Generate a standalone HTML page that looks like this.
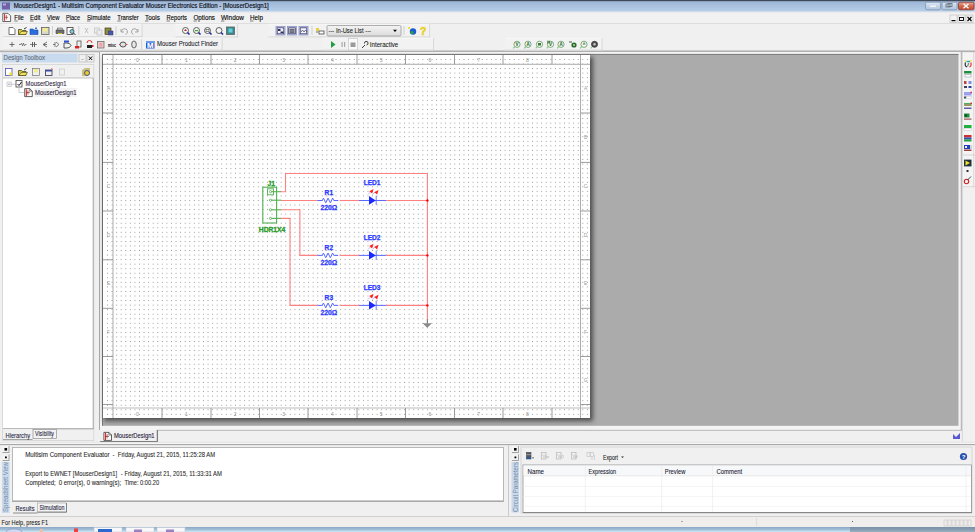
<!DOCTYPE html>
<html><head><meta charset="utf-8"><title>Multisim</title>
<style>html,body{margin:0;padding:0;background:#f0f0f0;overflow:hidden}body{width:975px;height:532px}svg{display:block;font-family:"Liberation Sans",sans-serif}</style>
</head><body>
<svg width="975" height="532" viewBox="0 0 975 532" font-family="Liberation Sans, sans-serif"><defs>
<linearGradient id="tg" x1="0" y1="0" x2="0" y2="1"><stop offset="0" stop-color="#9ab3d3"/><stop offset="1" stop-color="#b9d0ea"/></linearGradient>
<linearGradient id="wb" x1="0" y1="0" x2="0" y2="1"><stop offset="0" stop-color="#dfe9f5"/><stop offset="0.5" stop-color="#c3d4e8"/><stop offset="1" stop-color="#b0c6df"/></linearGradient>
<linearGradient id="cb" x1="0" y1="0" x2="0" y2="1"><stop offset="0" stop-color="#e8a898"/><stop offset="0.5" stop-color="#d06a50"/><stop offset="1" stop-color="#c04a30"/></linearGradient>
<linearGradient id="shr" x1="0" y1="0" x2="1" y2="0"><stop offset="0" stop-color="#5a5a5a"/><stop offset="1" stop-color="#ababab"/></linearGradient>
<linearGradient id="shb" x1="0" y1="0" x2="0" y2="1"><stop offset="0" stop-color="#5a5a5a"/><stop offset="1" stop-color="#ababab"/></linearGradient>
<linearGradient id="taskg" x1="0" y1="0" x2="0" y2="1"><stop offset="0" stop-color="#8aa6c4"/><stop offset="0.6" stop-color="#a9c4dc"/><stop offset="1" stop-color="#c8ecf8"/></linearGradient>
<linearGradient id="combo" x1="0" y1="0" x2="0" y2="1"><stop offset="0" stop-color="#f4f4f4"/><stop offset="1" stop-color="#dcdcdc"/></linearGradient>
<pattern id="dots" x="105.215" y="57.125" width="4.57" height="4.55" patternUnits="userSpaceOnUse"><rect x="1.785" y="1.775" width="1" height="1" fill="#9a9a9a"/></pattern>
<filter id="blur" x="-5%" y="-5%" width="110%" height="110%"><feGaussianBlur stdDeviation="2.2"/></filter>
</defs>
<rect x="0" y="0" width="975" height="532" fill="#f0f0f0" />
<rect x="0" y="0" width="975" height="12" fill="url(#tg)" />
<rect x="0" y="0" width="975" height="1.2" fill="#3e4a5a" />
<rect x="2" y="2.5" width="8" height="7" fill="#6f62a6" />
<rect x="3" y="3.5" width="3" height="2" fill="#b8a8e0" />
<text x="13.8" y="8.2" font-size="6.3" fill="#10101a" stroke="#10101a" stroke-width="0.16" textLength="254.9" lengthAdjust="spacingAndGlyphs" >MouserDesign1 - Multisim Component Evaluator Mouser Electronics Edition - [MouserDesign1]</text>
<rect x="925.5" y="2.2" width="15" height="7.6" rx="1.5" fill="url(#wb)" stroke="#7f93ad" stroke-width="0.8"/>
<rect x="942" y="2.2" width="15" height="7.6" rx="1.5" fill="url(#wb)" stroke="#7f93ad" stroke-width="0.8"/>
<rect x="958.5" y="2.2" width="15.5" height="7.6" rx="1.5" fill="url(#cb)" stroke="#8a3a2a" stroke-width="0.8"/>
<rect x="930" y="5.5" width="6" height="1.5" fill="#f4f4f4" />
<rect x="946" y="4" width="4" height="3" fill="none" stroke="#606a78" stroke-width="0.8" />
<rect x="948" y="3.5" width="4" height="3" fill="none" stroke="#606a78" stroke-width="0.8" />
<line x1="963.5" y1="3.8" x2="968.5" y2="8.2" stroke="#fff" stroke-width="1.3" />
<line x1="968.5" y1="3.8" x2="963.5" y2="8.2" stroke="#fff" stroke-width="1.3" />
<rect x="0" y="11.5" width="975" height="11.5" fill="#f1f1f1" />
<line x1="0" y1="11.8" x2="975" y2="11.8" stroke="#c8d4e0" stroke-width="0.6" />
<rect x="0" y="23" width="975" height="0.8" fill="#d4d4d4" />
<path d="M2.8,13.3 h5.2 l2.6,2.6 v5.6 h-7.8 z" fill="#fafafa" stroke="#404040" stroke-width="0.8"/>
<line x1="4.6" y1="14" x2="4.6" y2="20.8" stroke="#e03030" stroke-width="1.1" />
<line x1="6.4" y1="15" x2="6.4" y2="19.5" stroke="#e03030" stroke-width="0.7" />
<line x1="4.6" y1="17.3" x2="8" y2="17.3" stroke="#404040" stroke-width="0.6" />
<text x="14.3" y="19.8" font-size="6.6" fill="#000" stroke="#000" stroke-width="0.1" textLength="9.5" lengthAdjust="spacingAndGlyphs" >File</text>
<line x1="14.3" y1="21" x2="17.7" y2="21" stroke="#303030" stroke-width="0.6" />
<text x="30" y="19.8" font-size="6.6" fill="#000" stroke="#000" stroke-width="0.1" textLength="10.5" lengthAdjust="spacingAndGlyphs" >Edit</text>
<line x1="30" y1="21" x2="33.4" y2="21" stroke="#303030" stroke-width="0.6" />
<text x="47" y="19.8" font-size="6.6" fill="#000" stroke="#000" stroke-width="0.1" textLength="12.5" lengthAdjust="spacingAndGlyphs" >View</text>
<line x1="47" y1="21" x2="50.4" y2="21" stroke="#303030" stroke-width="0.6" />
<text x="66" y="19.8" font-size="6.6" fill="#000" stroke="#000" stroke-width="0.1" textLength="14" lengthAdjust="spacingAndGlyphs" >Place</text>
<line x1="66" y1="21" x2="69.4" y2="21" stroke="#303030" stroke-width="0.6" />
<text x="87" y="19.8" font-size="6.6" fill="#000" stroke="#000" stroke-width="0.1" textLength="23.6" lengthAdjust="spacingAndGlyphs" >Simulate</text>
<line x1="87" y1="21" x2="90.4" y2="21" stroke="#303030" stroke-width="0.6" />
<text x="117.3" y="19.8" font-size="6.6" fill="#000" stroke="#000" stroke-width="0.1" textLength="21.5" lengthAdjust="spacingAndGlyphs" >Transfer</text>
<line x1="117.3" y1="21" x2="120.7" y2="21" stroke="#303030" stroke-width="0.6" />
<text x="145" y="19.8" font-size="6.6" fill="#000" stroke="#000" stroke-width="0.1" textLength="15" lengthAdjust="spacingAndGlyphs" >Tools</text>
<line x1="145" y1="21" x2="148.4" y2="21" stroke="#303030" stroke-width="0.6" />
<text x="166.5" y="19.8" font-size="6.6" fill="#000" stroke="#000" stroke-width="0.1" textLength="20.5" lengthAdjust="spacingAndGlyphs" >Reports</text>
<line x1="166.5" y1="21" x2="169.9" y2="21" stroke="#303030" stroke-width="0.6" />
<text x="193.5" y="19.8" font-size="6.6" fill="#000" stroke="#000" stroke-width="0.1" textLength="21.5" lengthAdjust="spacingAndGlyphs" >Options</text>
<line x1="193.5" y1="21" x2="196.9" y2="21" stroke="#303030" stroke-width="0.6" />
<text x="221" y="19.8" font-size="6.6" fill="#000" stroke="#000" stroke-width="0.1" textLength="23" lengthAdjust="spacingAndGlyphs" >Window</text>
<line x1="221" y1="21" x2="224.4" y2="21" stroke="#303030" stroke-width="0.6" />
<text x="250" y="19.8" font-size="6.6" fill="#000" stroke="#000" stroke-width="0.1" textLength="13" lengthAdjust="spacingAndGlyphs" >Help</text>
<line x1="250" y1="21" x2="253.4" y2="21" stroke="#303030" stroke-width="0.6" />
<rect x="950" y="15" width="7" height="7.5" fill="#f2f2f2" stroke="#b8b8b8" stroke-width="0.6" />
<rect x="958" y="15" width="7" height="7.5" fill="#f2f2f2" stroke="#b8b8b8" stroke-width="0.6" />
<rect x="966" y="15" width="7" height="7.5" fill="#f2f2f2" stroke="#b8b8b8" stroke-width="0.6" />
<rect x="951.5" y="20" width="4" height="1.2" fill="#000" />
<rect x="959.5" y="17.5" width="4" height="3" fill="none" stroke="#000" stroke-width="0.9" />
<line x1="967.5" y1="16.8" x2="971.5" y2="21" stroke="#000" stroke-width="1.2" />
<line x1="971.5" y1="16.8" x2="967.5" y2="21" stroke="#000" stroke-width="1.2" />
<rect x="0" y="23.8" width="975" height="13.2" fill="#f0f0f0" />
<rect x="0" y="37" width="975" height="14" fill="#f0f0f0" />
<rect x="0" y="50.6" width="975" height="1.2" fill="#9a9a9a" />
<rect x="0" y="51.8" width="975" height="0.6" fill="#c8c8c8" />
<rect x="3" y="24" width="139.5" height="13" fill="#f2f2f2" />
<line x1="3" y1="24.3" x2="142.5" y2="24.3" stroke="#fafafa" stroke-width="0.6" />
<line x1="3" y1="36.6" x2="142.5" y2="36.6" stroke="#d0d0d0" stroke-width="0.8" />
<line x1="142.1" y1="24" x2="142.1" y2="37" stroke="#d0d0d0" stroke-width="0.8" />
<rect x="175.4" y="24" width="62.400000000000006" height="13.299999999999997" fill="#f2f2f2" />
<line x1="175.4" y1="24.3" x2="237.8" y2="24.3" stroke="#fafafa" stroke-width="0.6" />
<line x1="175.4" y1="36.9" x2="237.8" y2="36.9" stroke="#d0d0d0" stroke-width="0.8" />
<line x1="237.4" y1="24" x2="237.4" y2="37.3" stroke="#d0d0d0" stroke-width="0.8" />
<rect x="268.5" y="24" width="161.5" height="13.299999999999997" fill="#f2f2f2" />
<line x1="268.5" y1="24.3" x2="430" y2="24.3" stroke="#fafafa" stroke-width="0.6" />
<line x1="268.5" y1="36.9" x2="430" y2="36.9" stroke="#d0d0d0" stroke-width="0.8" />
<line x1="429.6" y1="24" x2="429.6" y2="37.3" stroke="#d0d0d0" stroke-width="0.8" />
<rect x="3" y="38" width="219.5" height="12.5" fill="#f2f2f2" />
<line x1="3" y1="38.3" x2="222.5" y2="38.3" stroke="#fafafa" stroke-width="0.6" />
<line x1="3" y1="50.1" x2="222.5" y2="50.1" stroke="#d0d0d0" stroke-width="0.8" />
<line x1="222.1" y1="38" x2="222.1" y2="50.5" stroke="#d0d0d0" stroke-width="0.8" />
<rect x="321.7" y="38" width="112.30000000000001" height="12.5" fill="#f2f2f2" />
<line x1="321.7" y1="38.3" x2="434" y2="38.3" stroke="#fafafa" stroke-width="0.6" />
<line x1="321.7" y1="50.1" x2="434" y2="50.1" stroke="#d0d0d0" stroke-width="0.8" />
<line x1="433.6" y1="38" x2="433.6" y2="50.5" stroke="#d0d0d0" stroke-width="0.8" />
<rect x="505.6" y="38" width="96.89999999999998" height="12.5" fill="#f2f2f2" />
<line x1="505.6" y1="38.3" x2="602.5" y2="38.3" stroke="#fafafa" stroke-width="0.6" />
<line x1="505.6" y1="50.1" x2="602.5" y2="50.1" stroke="#d0d0d0" stroke-width="0.8" />
<line x1="602.1" y1="38" x2="602.1" y2="50.5" stroke="#d0d0d0" stroke-width="0.8" />
<path d="M9,27.5 h4 l2,2 v5 h-6 z" fill="#fff" stroke="#505050" stroke-width="0.8"/>
<path d="M18.5,29.5 h3 l1,1 h3.5 v4 h-7.5 z" fill="#d8c840" stroke="#303010" stroke-width="0.7"/>
<path d="M19,34.5 l2,-3 h6.5 l-2,3 z" fill="#f0e060" stroke="#303010" stroke-width="0.5"/>
<line x1="24" y1="29" x2="26.5" y2="27.5" stroke="#202020" stroke-width="0.9" />
<path d="M30,29 h3 l1,1 h4 v4.5 h-8 z" fill="#2a6ee0" stroke="#1a4aa0" stroke-width="0.6"/>
<rect x="35" y="27.5" width="2" height="1.5" fill="#3a7ae0" />
<rect x="41.5" y="27.5" width="7.5" height="7" fill="#d8d8c8" stroke="#606060" stroke-width="0.8" />
<rect x="43" y="28" width="4.5" height="3.5" fill="#f2ec90" />
<line x1="52.5" y1="26" x2="52.5" y2="35" stroke="#c8c8c8" stroke-width="0.8" />
<path d="M56,30 h8 v3.5 h-8 z" fill="#707070" stroke="#404040" stroke-width="0.6"/>
<rect x="57.5" y="28" width="5" height="2" fill="#c0c0c0" stroke="#505050" stroke-width="0.5" />
<rect x="58" y="33" width="4" height="1" fill="#d0c040" />
<rect x="67" y="27.5" width="6" height="7" fill="#fff" stroke="#404040" stroke-width="0.8" />
<circle cx="72" cy="31.5" r="2" fill="#80d0e0" stroke="#303030" stroke-width="0.7"/>
<line x1="73.5" y1="33" x2="75.5" y2="35" stroke="#303030" stroke-width="1" />
<line x1="78.8" y1="26" x2="78.8" y2="35" stroke="#c8c8c8" stroke-width="0.8" />
<line x1="85" y1="28" x2="88" y2="33" stroke="#b8b8b8" stroke-width="0.8" />
<line x1="88" y1="28" x2="85" y2="33" stroke="#b8b8b8" stroke-width="0.8" />
<rect x="94.5" y="28" width="5" height="5" fill="#ececec" stroke="#c0c0c0" stroke-width="0.7" />
<rect x="97" y="30" width="5" height="5" fill="#ececec" stroke="#c0c0c0" stroke-width="0.7" />
<rect x="105" y="28" width="6" height="6.5" fill="#8a8a40" stroke="#404020" stroke-width="0.7" />
<rect x="108.5" y="31" width="4.5" height="4" fill="#4858b0" stroke="#303070" stroke-width="0.5" />
<line x1="116" y1="26" x2="116" y2="35" stroke="#c8c8c8" stroke-width="0.8" />
<path d="M121,29 v3 h3 M121.5,32 a3,3 0 1 1 4,2.5" fill="none" stroke="#a8a8a8" stroke-width="1"/>
<path d="M138,29 v3 h-3 M137.5,32 a3,3 0 1 0 -4,2.5" fill="none" stroke="#a8a8a8" stroke-width="1"/>
<circle cx="185.5" cy="30.5" r="3" fill="#f4f4f4" stroke="#505050" stroke-width="0.9"/>
<line x1="187.5" y1="32.5" x2="189.5" y2="34.5" stroke="#1a2a9a" stroke-width="1.6" />
<path d="M184,31 l1.5,-2 l1.5,2 z" fill="#c02020"/>
<circle cx="196.5" cy="30.5" r="3" fill="#f4f4f4" stroke="#505050" stroke-width="0.9"/>
<line x1="198.5" y1="32.5" x2="200.5" y2="34.5" stroke="#1a2a9a" stroke-width="1.6" />
<rect x="194.8" y="30" width="3.4" height="1.2" fill="#30b030"/>
<circle cx="207.5" cy="30.5" r="3" fill="#f4f4f4" stroke="#505050" stroke-width="0.9"/>
<line x1="209.5" y1="32.5" x2="211.5" y2="34.5" stroke="#1a2a9a" stroke-width="1.6" />
<rect x="206" y="29.5" width="3" height="2" fill="none" stroke="#606060" stroke-width="0.7"/>
<circle cx="219" cy="30.5" r="3" fill="#f4f4f4" stroke="#505050" stroke-width="0.9"/>
<line x1="221" y1="32.5" x2="223" y2="34.5" stroke="#1a2a9a" stroke-width="1.6" />
<rect x="226.5" y="27" width="8" height="7.5" fill="#3a8a8a" stroke="#606060" stroke-width="0.8" />
<rect x="228.5" y="28.5" width="4" height="4" fill="#60d0e0" />
<rect x="276" y="26.5" width="9" height="8.5" fill="#d8dcf0" stroke="#8088c0" stroke-width="0.7" />
<rect x="277.2" y="27.8" width="6.6" height="6" fill="#f4f4f8" stroke="#383870" stroke-width="0.8" />
<rect x="287.5" y="26.5" width="9" height="8.5" fill="#d8dcf0" stroke="#8088c0" stroke-width="0.7" />
<rect x="288.7" y="27.8" width="6.6" height="6" fill="#f4f4f8" stroke="#383870" stroke-width="0.8" />
<rect x="299" y="26.5" width="9" height="8.5" fill="#d8dcf0" stroke="#8088c0" stroke-width="0.7" />
<rect x="300.2" y="27.8" width="6.6" height="6" fill="#f4f4f8" stroke="#383870" stroke-width="0.8" />
<rect x="278" y="29" width="2.5" height="2" fill="#303050" />
<rect x="280.5" y="31.5" width="3" height="1.5" fill="#303050" />
<rect x="289.5" y="28.8" width="5" height="4.4" fill="#606070" />
<line x1="289.5" y1="30.3" x2="294.5" y2="30.3" stroke="#c0c0c0" stroke-width="0.4" />
<line x1="289.5" y1="31.8" x2="294.5" y2="31.8" stroke="#c0c0c0" stroke-width="0.4" />
<path d="M301,32 l1.5,-2 l1.5,2 l1.5,-2 l1.5,2" fill="none" stroke="#404060" stroke-width="0.7"/>
<line x1="312" y1="26" x2="312" y2="35" stroke="#c8c8c8" stroke-width="0.8" />
<rect x="316" y="28" width="3" height="3" fill="#e8d040" />
<rect x="319" y="31" width="5" height="3" fill="#fff" stroke="#303030" stroke-width="0.7" />
<line x1="317" y1="31" x2="317" y2="33" stroke="#303030" stroke-width="0.7" />
<rect x="327" y="25.5" width="74" height="10.5" rx="1.2" fill="url(#combo)" stroke="#9a9a9a" stroke-width="0.8"/>
<text x="328.5" y="33" font-size="6.6" fill="#1a1a1a" stroke="#1a1a1a" stroke-width="0.08" textLength="42.5" lengthAdjust="spacingAndGlyphs" >--- In-Use List ---</text>
<path d="M393,29.8 h4 l-2,2.2 z" fill="#000"/>
<line x1="404" y1="26" x2="404" y2="35" stroke="#c8c8c8" stroke-width="0.8" />
<circle cx="413" cy="31.5" r="3.2" fill="#1a5ad0"/>
<circle cx="412" cy="32.5" r="1.6" fill="#30a040"/>
<rect x="408" y="27" width="2" height="2" fill="#f0e040" />
<text x="420" y="35.3" font-size="10.5" fill="#e8d020" stroke="#e8d020" stroke-width="0.5" font-weight="bold" stroke="#6a5a10">?</text>
<line x1="9.5" y1="44.5" x2="14.5" y2="44.5" stroke="#505050" stroke-width="0.8" />
<line x1="12" y1="42" x2="12" y2="47" stroke="#505050" stroke-width="0.8" />
<path d="M19,44.5 h1.5 l1,-1.3 l1,2.6 l1,-2.6 l1,2.6 l1,-1.3 h1" fill="none" stroke="#505050" stroke-width="0.7"/>
<line x1="30" y1="44.5" x2="37" y2="44.5" stroke="#505050" stroke-width="0.7" />
<line x1="32.5" y1="42" x2="32.5" y2="47" stroke="#505050" stroke-width="0.9" />
<line x1="34.5" y1="42" x2="34.5" y2="47" stroke="#505050" stroke-width="0.9" />
<path d="M47,42 l-4,2.5 l4,2.5 M44,44.5 h3" fill="none" stroke="#505050" stroke-width="0.8"/>
<path d="M53,44.5 h2 M55,42 v5 M56,42 l3,2.5 l-3,2.5" fill="none" stroke="#505050" stroke-width="0.7"/>
<path d="M64,43 h3 q3,0 4,2.5 q-1,2.5 -4,2.5 h-3 z" fill="none" stroke="#303030" stroke-width="0.8"/>
<rect x="64" y="40.5" width="5" height="2" fill="#3050d0" />
<rect x="77" y="41" width="4" height="6" fill="#f0f0f0" stroke="#404040" stroke-width="0.7" />
<rect x="75" y="46" width="4" height="2.5" fill="#e02020" />
<path d="M87,43 a2.5,2.5 0 0 1 5,0" fill="none" stroke="#e02020" stroke-width="0.9"/>
<rect x="87" y="45" width="5" height="3" fill="#202020" />
<rect x="92" y="45" width="1.5" height="2" fill="#e02020" />
<rect x="97.5" y="41.5" width="6.5" height="6.5" fill="#e8c8c8" stroke="#707070" stroke-width="0.8" />
<rect x="99.5" y="43" width="2.5" height="3.5" fill="#f0a0a0" />
<text x="108" y="46.5" font-size="4.5" fill="#202020" stroke="#202020" stroke-width="0.08" textLength="8" lengthAdjust="spacingAndGlyphs" font-weight="bold" >misc</text>
<ellipse cx="123" cy="44.5" rx="3" ry="2.5" fill="#e0e0e0" stroke="#303030" stroke-width="0.8"/>
<line x1="119" y1="44.5" x2="120" y2="44.5" stroke="#e02020" stroke-width="0.8" />
<line x1="126" y1="44.5" x2="127.5" y2="44.5" stroke="#e02020" stroke-width="0.8" />
<ellipse cx="134" cy="44.5" rx="2.3" ry="3.5" fill="#e8e8e8" stroke="#404040" stroke-width="0.8"/>
<line x1="141.6" y1="39.5" x2="141.6" y2="49.5" stroke="#c8c8c8" stroke-width="0.8" />
<rect x="146" y="41" width="8.5" height="7.5" fill="#2a5ad0" />
<rect x="146" y="41" width="8.5" height="2" fill="#6a9ae8" />
<text x="147" y="48" font-size="6.5" fill="#fff" stroke="#fff" stroke-width="0.08" textLength="6.5" lengthAdjust="spacingAndGlyphs" font-weight="bold" >M</text>
<text x="157" y="46.3" font-size="6.6" fill="#1a1a2a" stroke="#1a1a2a" stroke-width="0.08" textLength="61" lengthAdjust="spacingAndGlyphs" >Mouser Product Finder</text>
<path d="M331,41 l4.5,3.5 l-4.5,3.5 z" fill="#20a040"/>
<rect x="341.5" y="42" width="1.2" height="5" fill="#a8a8a8" />
<rect x="344" y="42" width="1.2" height="5" fill="#a8a8a8" />
<rect x="348.5" y="38.5" width="9" height="11.5" fill="#fafafa" stroke="#c8c8c8" stroke-width="0.7" />
<rect x="350.5" y="42.5" width="5" height="4.5" fill="#9a9a9a" />
<path d="M362,48 l3,-3 M364.5,43.5 a1.8,1.8 0 1 1 2,1.5" fill="none" stroke="#404040" stroke-width="1"/>
<text x="369.8" y="47.3" font-size="6.6" fill="#1a1a1a" stroke="#1a1a1a" stroke-width="0.08" textLength="28.5" lengthAdjust="spacingAndGlyphs" >Interactive</text>
<circle cx="517" cy="44.3" r="3.1" fill="#f4f8f4" stroke="#4a8a4a" stroke-width="0.7"/>
<line x1="514.7" y1="46.6" x2="513.2" y2="48.3" stroke="#80c880" stroke-width="1.1" />
<text x="517" y="46.2" font-size="4.5" fill="#2a6a2a" stroke="#2a6a2a" stroke-width="0.08" font-weight="bold" text-anchor="middle" >V</text>
<circle cx="528" cy="44.3" r="3.1" fill="#f4f8f4" stroke="#4a8a4a" stroke-width="0.7"/>
<line x1="525.7" y1="46.6" x2="524.2" y2="48.3" stroke="#80c880" stroke-width="1.1" />
<text x="528" y="46.2" font-size="4.5" fill="#2a6a2a" stroke="#2a6a2a" stroke-width="0.08" font-weight="bold" text-anchor="middle" >A</text>
<circle cx="539.5" cy="44.3" r="3.1" fill="#f4f8f4" stroke="#4a8a4a" stroke-width="0.7"/>
<line x1="537.2" y1="46.6" x2="535.7" y2="48.3" stroke="#80c880" stroke-width="1.1" />
<circle cx="550.5" cy="44.3" r="3.1" fill="#f4f8f4" stroke="#4a8a4a" stroke-width="0.7"/>
<line x1="548.2" y1="46.6" x2="546.7" y2="48.3" stroke="#80c880" stroke-width="1.1" />
<text x="550.5" y="46.2" font-size="4.5" fill="#2a6a2a" stroke="#2a6a2a" stroke-width="0.08" font-weight="bold" text-anchor="middle" >V</text>
<circle cx="561" cy="44.3" r="3.1" fill="#f4f8f4" stroke="#4a8a4a" stroke-width="0.7"/>
<line x1="558.7" y1="46.6" x2="557.2" y2="48.3" stroke="#80c880" stroke-width="1.1" />
<text x="561" y="46.2" font-size="4.5" fill="#2a6a2a" stroke="#2a6a2a" stroke-width="0.08" font-weight="bold" text-anchor="middle" >A</text>
<circle cx="584" cy="44.3" r="3.1" fill="#f4f8f4" stroke="#4a8a4a" stroke-width="0.7"/>
<line x1="581.7" y1="46.6" x2="580.2" y2="48.3" stroke="#80c880" stroke-width="1.1" />
<text x="584" y="46.2" font-size="4.5" fill="#2a6a2a" stroke="#2a6a2a" stroke-width="0.08" font-weight="bold" text-anchor="middle" >^</text>
<rect x="538" y="43" width="3" height="2.5" fill="#3a7a3a" />
<line x1="547" y1="41.3" x2="550" y2="41.3" stroke="#3a7a3a" stroke-width="0.9" />
<line x1="547" y1="42.8" x2="550" y2="42.8" stroke="#3a7a3a" stroke-width="0.9" />
<circle cx="574" cy="45" r="2.6" fill="#2a6a2a"/>
<line x1="569" y1="42" x2="572" y2="42" stroke="#2a5a2a" stroke-width="0.9" />
<rect x="573.3" y="44" width="1.4" height="2" fill="#c0e0c0" />
<circle cx="594.5" cy="44.3" r="3" fill="#505050" stroke="#303030" stroke-width="0.8"/>
<circle cx="594.5" cy="44.3" r="1.2" fill="#c0c0c0"/>
<line x1="592" y1="46.8" x2="590.8" y2="48.3" stroke="#80c880" stroke-width="1.1" />
<rect x="2" y="53.5" width="75.5" height="9" fill="#c8daee" />
<text x="3.6" y="60.3" font-size="6.6" fill="#606a78" stroke="#606a78" stroke-width="0.08" textLength="41.5" lengthAdjust="spacingAndGlyphs" >Design Toolbox</text>
<rect x="79" y="54.5" width="7" height="7.5" fill="#f0f0f0" stroke="#b0b0b0" stroke-width="0.6" />
<line x1="81.5" y1="59.5" x2="83.5" y2="59.5" stroke="#909090" stroke-width="0.6" />
<rect x="87" y="54.5" width="7" height="7.5" fill="#f0f0f0" stroke="#b0b0b0" stroke-width="0.6" />
<line x1="88.8" y1="56.5" x2="92.2" y2="60" stroke="#000" stroke-width="1" />
<line x1="92.2" y1="56.5" x2="88.8" y2="60" stroke="#000" stroke-width="1" />
<rect x="2.4" y="64.4" width="91.4" height="376" fill="none" stroke="#d4d4d4" stroke-width="0.8" />
<rect x="5.5" y="68.5" width="6.5" height="7" fill="#fff" stroke="#5050b0" stroke-width="0.8" />
<rect x="9.5" y="72.5" width="2.5" height="3" fill="#e8e030" />
<path d="M18.5,70.5 h3 l1,1 h3.5 v4 h-7.5 z" fill="#d8c840" stroke="#303010" stroke-width="0.7"/>
<path d="M19,75.5 l2,-3 h6.5 l-2,3 z" fill="#f0e060" stroke="#303010" stroke-width="0.5"/>
<line x1="24" y1="70" x2="26.5" y2="68.5" stroke="#202020" stroke-width="0.9" />
<rect x="32.5" y="68.5" width="7" height="7" fill="#f0f0f0" stroke="#707070" stroke-width="0.7" />
<rect x="34" y="69" width="4" height="3.5" fill="#f2ec90" />
<rect x="45.5" y="70" width="6.5" height="5.5" fill="#f0f0f0" stroke="#303050" stroke-width="0.8" />
<rect x="45.5" y="70" width="6.5" height="1.5" fill="#3a4aa0" />
<line x1="51" y1="68.5" x2="53" y2="69.5" stroke="#e04040" stroke-width="0.7" />
<rect x="59.5" y="69" width="5" height="6" fill="none" stroke="#c8c8c8" stroke-width="0.7" />
<path d="M82,70 l3,-2 h5 v6 l-3,2 h-5 z" fill="#c8c080"/>
<circle cx="87" cy="73" r="2.5" fill="#e8d020" stroke="#3030a0" stroke-width="0.8"/>
<rect x="3" y="78" width="90" height="351" fill="#ffffff" />
<line x1="3" y1="78" x2="93" y2="78" stroke="#a0a0a0" stroke-width="0.6" />
<rect x="7" y="82" width="4.5" height="4.5" fill="#f4f4f4" stroke="#b8b8b8" stroke-width="0.6" />
<line x1="8" y1="84.25" x2="10.5" y2="84.25" stroke="#8080c0" stroke-width="0.6" />
<line x1="11.5" y1="84.3" x2="16" y2="84.3" stroke="#b0b0b0" stroke-width="0.6" />
<rect x="16" y="80.5" width="6" height="6.5" fill="#fff" stroke="#404040" stroke-width="0.8" />
<path d="M17.5,84 l1.5,1.5 l2.5,-3.5" fill="none" stroke="#000" stroke-width="0.9"/>
<text x="25.6" y="85.6" font-size="6.6" fill="#2a1a3a" stroke="#2a1a3a" stroke-width="0.08" textLength="41" lengthAdjust="spacingAndGlyphs" >MouserDesign1</text>
<line x1="19" y1="87" x2="19" y2="92.5" stroke="#b0b0b0" stroke-width="0.6" />
<line x1="19" y1="92.5" x2="24" y2="92.5" stroke="#b0b0b0" stroke-width="0.6" />
<rect x="34" y="88" width="43" height="9" fill="#f2f2f2" />
<g transform="translate(24.3,88.2) scale(1.0)"><path d="M0.4,0.4 h5 l2.6,2.6 v5.4 h-7.6 z" fill="#fbfbfb" stroke="#383838" stroke-width="0.8"/><path d="M5.4,0.4 v2.6 h2.6" fill="none" stroke="#383838" stroke-width="0.6"/><line x1="2" y1="1" x2="2" y2="8" stroke="#e02828" stroke-width="1.1"/><line x1="3.6" y1="2" x2="3.6" y2="6.5" stroke="#e02828" stroke-width="0.7"/><line x1="2" y1="4.4" x2="5.5" y2="4.4" stroke="#383838" stroke-width="0.7"/></g>
<text x="35" y="94.5" font-size="6.6" fill="#2a1a3a" stroke="#2a1a3a" stroke-width="0.08" textLength="41.5" lengthAdjust="spacingAndGlyphs" >MouserDesign1</text>
<line x1="3" y1="428.8" x2="93.5" y2="428.8" stroke="#909090" stroke-width="0.9" />
<line x1="93.2" y1="78" x2="93.2" y2="429" stroke="#a0a0a0" stroke-width="0.9" />
<rect x="3" y="429" width="29.5" height="10.5" fill="#f0f0f0" />
<line x1="3" y1="439.5" x2="32.5" y2="439.5" stroke="#808080" stroke-width="0.7" />
<text x="5.5" y="437.5" font-size="6.3" fill="#202040" stroke="#202040" stroke-width="0.08" textLength="24.5" lengthAdjust="spacingAndGlyphs" >Hierarchy</text>
<rect x="33" y="429.5" width="23.5" height="9" fill="#f3f3f3" stroke="#909090" stroke-width="0.7" />
<text x="35" y="436.3" font-size="6.3" fill="#202040" stroke="#202040" stroke-width="0.08" textLength="19" lengthAdjust="spacingAndGlyphs" >Visibility</text>
<rect x="99.5" y="52" width="862" height="378" fill="#f4f4f4" />
<line x1="99.5" y1="52" x2="99.5" y2="430" stroke="#a8a8a8" stroke-width="1" />
<line x1="961.3" y1="52" x2="961.3" y2="430.5" stroke="#a8a8a8" stroke-width="1" />
<line x1="157" y1="430.3" x2="961.8" y2="430.3" stroke="#b8b8b8" stroke-width="1" />
<rect x="102" y="54" width="856.5" height="371.8" fill="#ababab" />
<line x1="102.5" y1="54" x2="102.5" y2="425.8" stroke="#7a7a7a" stroke-width="1" />
<line x1="102" y1="54.4" x2="958.5" y2="54.4" stroke="#7a7a7a" stroke-width="1" />
<rect x="104" y="57" width="489" height="364" fill="#303030" opacity="0.75" filter="url(#blur)"/>
<rect x="103" y="55" width="487" height="363" fill="#ffffff" />
<rect x="104.5" y="56.5" width="485.5" height="361.5" fill="url(#dots)" />
<line x1="103" y1="64.3" x2="590" y2="64.3" stroke="#bcbcbc" stroke-width="1.2" />
<line x1="103" y1="408" x2="590" y2="408" stroke="#bcbcbc" stroke-width="1.2" />
<line x1="113" y1="55" x2="113" y2="418" stroke="#a4a4a4" stroke-width="0.9" />
<line x1="580.5" y1="55" x2="580.5" y2="418" stroke="#a4a4a4" stroke-width="0.9" />
<line x1="162" y1="55" x2="162" y2="64.3" stroke="#9c9c9c" stroke-width="1" />
<line x1="162" y1="408" x2="162" y2="418" stroke="#9c9c9c" stroke-width="1" />
<line x1="211" y1="55" x2="211" y2="64.3" stroke="#9c9c9c" stroke-width="1" />
<line x1="211" y1="408" x2="211" y2="418" stroke="#9c9c9c" stroke-width="1" />
<line x1="259.5" y1="55" x2="259.5" y2="64.3" stroke="#9c9c9c" stroke-width="1" />
<line x1="259.5" y1="408" x2="259.5" y2="418" stroke="#9c9c9c" stroke-width="1" />
<line x1="308" y1="55" x2="308" y2="64.3" stroke="#9c9c9c" stroke-width="1" />
<line x1="308" y1="408" x2="308" y2="418" stroke="#9c9c9c" stroke-width="1" />
<line x1="357" y1="55" x2="357" y2="64.3" stroke="#9c9c9c" stroke-width="1" />
<line x1="357" y1="408" x2="357" y2="418" stroke="#9c9c9c" stroke-width="1" />
<line x1="405.5" y1="55" x2="405.5" y2="64.3" stroke="#9c9c9c" stroke-width="1" />
<line x1="405.5" y1="408" x2="405.5" y2="418" stroke="#9c9c9c" stroke-width="1" />
<line x1="454.5" y1="55" x2="454.5" y2="64.3" stroke="#9c9c9c" stroke-width="1" />
<line x1="454.5" y1="408" x2="454.5" y2="418" stroke="#9c9c9c" stroke-width="1" />
<line x1="503" y1="55" x2="503" y2="64.3" stroke="#9c9c9c" stroke-width="1" />
<line x1="503" y1="408" x2="503" y2="418" stroke="#9c9c9c" stroke-width="1" />
<line x1="552" y1="55" x2="552" y2="64.3" stroke="#9c9c9c" stroke-width="1" />
<line x1="552" y1="408" x2="552" y2="418" stroke="#9c9c9c" stroke-width="1" />
<text x="137.5" y="62" font-size="5" fill="#909090" text-anchor="middle" >0</text>
<text x="137.5" y="415.5" font-size="5" fill="#909090" text-anchor="middle" >0</text>
<text x="186.5" y="62" font-size="5" fill="#909090" text-anchor="middle" >1</text>
<text x="186.5" y="415.5" font-size="5" fill="#909090" text-anchor="middle" >1</text>
<text x="235.25" y="62" font-size="5" fill="#909090" text-anchor="middle" >2</text>
<text x="235.25" y="415.5" font-size="5" fill="#909090" text-anchor="middle" >2</text>
<text x="283.75" y="62" font-size="5" fill="#909090" text-anchor="middle" >3</text>
<text x="283.75" y="415.5" font-size="5" fill="#909090" text-anchor="middle" >3</text>
<text x="332.5" y="62" font-size="5" fill="#909090" text-anchor="middle" >4</text>
<text x="332.5" y="415.5" font-size="5" fill="#909090" text-anchor="middle" >4</text>
<text x="381.25" y="62" font-size="5" fill="#909090" text-anchor="middle" >5</text>
<text x="381.25" y="415.5" font-size="5" fill="#909090" text-anchor="middle" >5</text>
<text x="430.0" y="62" font-size="5" fill="#909090" text-anchor="middle" >6</text>
<text x="430.0" y="415.5" font-size="5" fill="#909090" text-anchor="middle" >6</text>
<text x="478.75" y="62" font-size="5" fill="#909090" text-anchor="middle" >7</text>
<text x="478.75" y="415.5" font-size="5" fill="#909090" text-anchor="middle" >7</text>
<text x="527.5" y="62" font-size="5" fill="#909090" text-anchor="middle" >8</text>
<text x="527.5" y="415.5" font-size="5" fill="#909090" text-anchor="middle" >8</text>
<line x1="103" y1="113" x2="113" y2="113" stroke="#9c9c9c" stroke-width="1" />
<line x1="580.5" y1="113" x2="590" y2="113" stroke="#9c9c9c" stroke-width="1" />
<line x1="103" y1="162.4" x2="113" y2="162.4" stroke="#9c9c9c" stroke-width="1" />
<line x1="580.5" y1="162.4" x2="590" y2="162.4" stroke="#9c9c9c" stroke-width="1" />
<line x1="103" y1="211" x2="113" y2="211" stroke="#9c9c9c" stroke-width="1" />
<line x1="580.5" y1="211" x2="590" y2="211" stroke="#9c9c9c" stroke-width="1" />
<line x1="103" y1="259.8" x2="113" y2="259.8" stroke="#9c9c9c" stroke-width="1" />
<line x1="580.5" y1="259.8" x2="590" y2="259.8" stroke="#9c9c9c" stroke-width="1" />
<line x1="103" y1="308.3" x2="113" y2="308.3" stroke="#9c9c9c" stroke-width="1" />
<line x1="580.5" y1="308.3" x2="590" y2="308.3" stroke="#9c9c9c" stroke-width="1" />
<line x1="103" y1="356.5" x2="113" y2="356.5" stroke="#9c9c9c" stroke-width="1" />
<line x1="580.5" y1="356.5" x2="590" y2="356.5" stroke="#9c9c9c" stroke-width="1" />
<line x1="103" y1="404.5" x2="113" y2="404.5" stroke="#9c9c9c" stroke-width="1" />
<line x1="580.5" y1="404.5" x2="590" y2="404.5" stroke="#9c9c9c" stroke-width="1" />
<text x="108.5" y="89.85000000000001" font-size="4.8" fill="#999" text-anchor="middle" >A</text>
<text x="585.5" y="89.85000000000001" font-size="4.8" fill="#999" text-anchor="middle" >A</text>
<text x="108.5" y="138.89999999999998" font-size="4.8" fill="#999" text-anchor="middle" >B</text>
<text x="585.5" y="138.89999999999998" font-size="4.8" fill="#999" text-anchor="middle" >B</text>
<text x="108.5" y="187.89999999999998" font-size="4.8" fill="#999" text-anchor="middle" >C</text>
<text x="585.5" y="187.89999999999998" font-size="4.8" fill="#999" text-anchor="middle" >C</text>
<text x="108.5" y="236.6" font-size="4.8" fill="#999" text-anchor="middle" >D</text>
<text x="585.5" y="236.6" font-size="4.8" fill="#999" text-anchor="middle" >D</text>
<text x="108.5" y="285.25" font-size="4.8" fill="#999" text-anchor="middle" >E</text>
<text x="585.5" y="285.25" font-size="4.8" fill="#999" text-anchor="middle" >E</text>
<text x="108.5" y="333.59999999999997" font-size="4.8" fill="#999" text-anchor="middle" >F</text>
<text x="585.5" y="333.59999999999997" font-size="4.8" fill="#999" text-anchor="middle" >F</text>
<text x="108.5" y="381.7" font-size="4.8" fill="#999" text-anchor="middle" >G</text>
<text x="585.5" y="381.7" font-size="4.8" fill="#999" text-anchor="middle" >G</text>
<path d="M281,191.7 L285.5,191.7 L285.5,173.5 L427.4,173.5 L427.4,319" fill="none" stroke="#ff8080" stroke-width="1.1"/>
<path d="M281,200.5 L317.5,200.5" fill="none" stroke="#ff8080" stroke-width="1.1"/>
<path d="M339.5,200.5 L359,200.5" fill="none" stroke="#ff8080" stroke-width="1.1"/>
<path d="M386,200.5 L427.4,200.5" fill="none" stroke="#ff8080" stroke-width="1.1"/>
<path d="M281,209.8 L299.9,209.8 L299.9,255.4 L317.5,255.4" fill="none" stroke="#ff8080" stroke-width="1.1"/>
<path d="M339.5,255.4 L359,255.4" fill="none" stroke="#ff8080" stroke-width="1.1"/>
<path d="M386,255.4 L427.4,255.4" fill="none" stroke="#ff8080" stroke-width="1.1"/>
<path d="M281,218.4 L290,218.4 L290,305.4 L317.5,305.4" fill="none" stroke="#ff8080" stroke-width="1.1"/>
<path d="M339.5,305.4 L359,305.4" fill="none" stroke="#ff8080" stroke-width="1.1"/>
<path d="M386,305.4 L427.4,305.4" fill="none" stroke="#ff8080" stroke-width="1.1"/>
<circle cx="427.4" cy="200.5" r="1.2" fill="#ff0000"/>
<circle cx="427.4" cy="255.4" r="1.2" fill="#ff0000"/>
<circle cx="427.4" cy="305.4" r="1.2" fill="#ff0000"/>
<line x1="427.4" y1="319" x2="427.4" y2="323.5" stroke="#808080" stroke-width="1.2" />
<path d="M422.5,323.3 h9.5 l-4.75,4.5 z" fill="#8a8a8a"/>
<rect x="262.8" y="187.2" width="13.8" height="35.8" fill="none" stroke="#52b052" stroke-width="1.1" />
<rect x="267.5" y="188.8" width="6" height="6" fill="none" stroke="#52b052" stroke-width="0.9" />
<circle cx="270.5" cy="191.7" r="1.1" fill="#fff" stroke="#52b052" stroke-width="0.8"/>
<line x1="271.6" y1="191.7" x2="281" y2="191.7" stroke="#52b052" stroke-width="1.1" />
<circle cx="270.5" cy="200.2" r="1.1" fill="#fff" stroke="#52b052" stroke-width="0.8"/>
<line x1="271.6" y1="200.2" x2="281" y2="200.2" stroke="#52b052" stroke-width="1.1" />
<circle cx="270.5" cy="209.8" r="1.1" fill="#fff" stroke="#52b052" stroke-width="0.8"/>
<line x1="271.6" y1="209.8" x2="281" y2="209.8" stroke="#52b052" stroke-width="1.1" />
<circle cx="270.5" cy="218.4" r="1.1" fill="#fff" stroke="#52b052" stroke-width="0.8"/>
<line x1="271.6" y1="218.4" x2="281" y2="218.4" stroke="#52b052" stroke-width="1.1" />
<text x="267.6" y="186" font-size="6.8" fill="#2a9a2a" stroke="#2a9a2a" stroke-width="0.3" textLength="7.5" lengthAdjust="spacingAndGlyphs" font-weight="bold" >J1</text>
<text x="258.8" y="232" font-size="6.8" fill="#2a9a2a" stroke="#2a9a2a" stroke-width="0.3" textLength="26.5" lengthAdjust="spacingAndGlyphs" font-weight="bold" >HDR1X4</text>
<path d="M317.5,200.5 h4.8 l1.15,-2.4 l2.3,4.8 l2.3,-4.8 l2.3,4.8 l2.3,-4.8 l1.15,2.4 h4.5" fill="none" stroke="#5a6aff" stroke-width="1"/>
<text x="324.6" y="194.7" font-size="6.6" fill="#2a3aff" stroke="#2a3aff" stroke-width="0.25" textLength="8.5" lengthAdjust="spacingAndGlyphs" font-weight="bold" >R1</text>
<text x="320.4" y="209.7" font-size="6.6" fill="#2a3aff" stroke="#2a3aff" stroke-width="0.25" textLength="16.8" lengthAdjust="spacingAndGlyphs" font-weight="bold" >220&#937;</text>
<line x1="359" y1="200.5" x2="386" y2="200.5" stroke="#5a6aff" stroke-width="1" />
<path d="M369,196.1 L375.8,200.5 L369,204.7 z" fill="#1a2aff"/>
<line x1="376.2" y1="195.9" x2="376.2" y2="204.9" stroke="#5a6aff" stroke-width="0.9" />
<text x="363.7" y="184.9" font-size="6.6" fill="#2a3aff" stroke="#2a3aff" stroke-width="0.25" textLength="16.8" lengthAdjust="spacingAndGlyphs" font-weight="bold" >LED1</text>
<line x1="368" y1="194.5" x2="371" y2="191.5" stroke="#8090ff" stroke-width="0.6" />
<line x1="372.5" y1="194.5" x2="375.5" y2="191.5" stroke="#8090ff" stroke-width="0.6" />
<path d="M369.3,191.2 l4.3,-2.3 l-1.5,4.6 z" fill="#ff2020"/>
<path d="M374.3,192.2 l4.3,-2.3 l-1.5,4.6 z" fill="#ff2020"/>
<path d="M317.5,255.4 h4.8 l1.15,-2.4 l2.3,4.8 l2.3,-4.8 l2.3,4.8 l2.3,-4.8 l1.15,2.4 h4.5" fill="none" stroke="#5a6aff" stroke-width="1"/>
<text x="324.6" y="249.6" font-size="6.6" fill="#2a3aff" stroke="#2a3aff" stroke-width="0.25" textLength="8.5" lengthAdjust="spacingAndGlyphs" font-weight="bold" >R2</text>
<text x="320.4" y="264.6" font-size="6.6" fill="#2a3aff" stroke="#2a3aff" stroke-width="0.25" textLength="16.8" lengthAdjust="spacingAndGlyphs" font-weight="bold" >220&#937;</text>
<line x1="359" y1="255.4" x2="386" y2="255.4" stroke="#5a6aff" stroke-width="1" />
<path d="M369,251.0 L375.8,255.4 L369,259.6 z" fill="#1a2aff"/>
<line x1="376.2" y1="250.8" x2="376.2" y2="259.8" stroke="#5a6aff" stroke-width="0.9" />
<text x="363.7" y="239.8" font-size="6.6" fill="#2a3aff" stroke="#2a3aff" stroke-width="0.25" textLength="16.8" lengthAdjust="spacingAndGlyphs" font-weight="bold" >LED2</text>
<line x1="368" y1="249.4" x2="371" y2="246.4" stroke="#8090ff" stroke-width="0.6" />
<line x1="372.5" y1="249.4" x2="375.5" y2="246.4" stroke="#8090ff" stroke-width="0.6" />
<path d="M369.3,246.1 l4.3,-2.3 l-1.5,4.6 z" fill="#ff2020"/>
<path d="M374.3,247.1 l4.3,-2.3 l-1.5,4.6 z" fill="#ff2020"/>
<path d="M317.5,305.4 h4.8 l1.15,-2.4 l2.3,4.8 l2.3,-4.8 l2.3,4.8 l2.3,-4.8 l1.15,2.4 h4.5" fill="none" stroke="#5a6aff" stroke-width="1"/>
<text x="324.6" y="299.59999999999997" font-size="6.6" fill="#2a3aff" stroke="#2a3aff" stroke-width="0.25" textLength="8.5" lengthAdjust="spacingAndGlyphs" font-weight="bold" >R3</text>
<text x="320.4" y="314.59999999999997" font-size="6.6" fill="#2a3aff" stroke="#2a3aff" stroke-width="0.25" textLength="16.8" lengthAdjust="spacingAndGlyphs" font-weight="bold" >220&#937;</text>
<line x1="359" y1="305.4" x2="386" y2="305.4" stroke="#5a6aff" stroke-width="1" />
<path d="M369,301.0 L375.8,305.4 L369,309.59999999999997 z" fill="#1a2aff"/>
<line x1="376.2" y1="300.79999999999995" x2="376.2" y2="309.79999999999995" stroke="#5a6aff" stroke-width="0.9" />
<text x="363.7" y="289.79999999999995" font-size="6.6" fill="#2a3aff" stroke="#2a3aff" stroke-width="0.25" textLength="16.8" lengthAdjust="spacingAndGlyphs" font-weight="bold" >LED3</text>
<line x1="368" y1="299.4" x2="371" y2="296.4" stroke="#8090ff" stroke-width="0.6" />
<line x1="372.5" y1="299.4" x2="375.5" y2="296.4" stroke="#8090ff" stroke-width="0.6" />
<path d="M369.3,296.09999999999997 l4.3,-2.3 l-1.5,4.6 z" fill="#ff2020"/>
<path d="M374.3,297.09999999999997 l4.3,-2.3 l-1.5,4.6 z" fill="#ff2020"/>
<rect x="100" y="430" width="57.5" height="11.5" fill="#f0f0f0" />
<line x1="157.3" y1="430" x2="157.3" y2="442" stroke="#606060" stroke-width="1" />
<line x1="100.5" y1="441.5" x2="157.8" y2="441.5" stroke="#505050" stroke-width="1" />
<g transform="translate(103.5,432) scale(1.0)"><path d="M0.4,0.4 h5 l2.6,2.6 v5.4 h-7.6 z" fill="#fbfbfb" stroke="#383838" stroke-width="0.8"/><path d="M5.4,0.4 v2.6 h2.6" fill="none" stroke="#383838" stroke-width="0.6"/><line x1="2" y1="1" x2="2" y2="8" stroke="#e02828" stroke-width="1.1"/><line x1="3.6" y1="2" x2="3.6" y2="6.5" stroke="#e02828" stroke-width="0.7"/><line x1="2" y1="4.4" x2="5.5" y2="4.4" stroke="#383838" stroke-width="0.7"/></g>
<text x="114" y="437.6" font-size="6.6" fill="#1a1030" stroke="#1a1030" stroke-width="0.08" textLength="40.6" lengthAdjust="spacingAndGlyphs" >MouserDesign1</text>
<path d="M953,434 l3,3 l4,-4 v6 h-7 z" fill="#5a5ad0"/>
<rect x="962.2" y="52.5" width="12.8" height="134" fill="#f4f4f4" />
<line x1="962.4" y1="52.5" x2="962.4" y2="443" stroke="#d0d0d0" stroke-width="0.8" />
<path d="M965.5,62.5 q-1.2,3.5 1.5,4.5" fill="none" stroke="#202020" stroke-width="1.1"/>
<path d="M970.8,62.5 q1.2,3.5 -1.5,4.5" fill="none" stroke="#f02020" stroke-width="1.1"/>
<rect x="966.5" y="60.8" width="3.5" height="1.5" fill="#30a0a0" />
<rect x="964.8" y="60" width="1.3" height="1.6" fill="#f0e020" />
<rect x="970.3" y="60" width="1.3" height="1.6" fill="#f0e020" />
<rect x="967" y="62.5" width="2.5" height="4" fill="#c8e8e8" />
<line x1="968.8" y1="63" x2="967.5" y2="66.5" stroke="#303030" stroke-width="0.6" />
<line x1="973.7" y1="52" x2="973.7" y2="187" stroke="#c8c8c8" stroke-width="0.6" />
<rect x="964" y="71" width="7.5" height="2.5" fill="#209040" />
<rect x="965" y="74.5" width="6" height="2.5" fill="#fff" stroke="#9090a0" stroke-width="0.5" />
<rect x="964" y="81" width="2.5" height="3" fill="#c04040" />
<rect x="968.5" y="81" width="3" height="3" fill="#8090e0" />
<rect x="964" y="86" width="3" height="2" fill="#404060" />
<rect x="968.5" y="86" width="3" height="2" fill="#3040a0" />
<rect x="964" y="92" width="7.5" height="3.5" fill="#9aa0f0" />
<rect x="970.5" y="91.7" width="1.5" height="1.5" fill="#e03030" />
<rect x="964" y="96.5" width="2" height="2" fill="#404060" />
<rect x="966.5" y="96.5" width="5" height="2" fill="#fff" stroke="#b0b0b0" stroke-width="0.4" />
<rect x="964" y="103" width="7.5" height="3" fill="#50b060" />
<rect x="964" y="104.5" width="7.5" height="1" fill="#e08060" />
<rect x="970.5" y="102.5" width="1.5" height="1.5" fill="#e03030" />
<rect x="964" y="107.5" width="7.5" height="1.5" fill="#6060a0" />
<rect x="964" y="113.5" width="5.5" height="4" fill="#209040" />
<rect x="965" y="114.5" width="2" height="2" fill="#104020" />
<rect x="964" y="118.5" width="7.5" height="1.2" fill="#a05050" />
<rect x="964" y="125" width="7.5" height="3" fill="#20b040" />
<rect x="964" y="128.5" width="7.5" height="2" fill="#fff" stroke="#b0b0b0" stroke-width="0.4" />
<rect x="964" y="135" width="7.5" height="2.5" fill="#d03030" />
<rect x="964" y="137.5" width="7.5" height="2" fill="#3050b0" />
<rect x="964" y="139.5" width="7.5" height="2" fill="#20a040" />
<rect x="964" y="145" width="6" height="4" fill="#2040c0" />
<rect x="965" y="146" width="2" height="2" fill="#f0f0f0" />
<rect x="964" y="149.5" width="7.5" height="1.5" fill="#a04040" />
<line x1="971" y1="145" x2="971" y2="149" stroke="#808080" stroke-width="0.6" />
<line x1="963" y1="155" x2="975" y2="155" stroke="#c8c8c8" stroke-width="0.7" />
<rect x="964" y="159.6" width="7.5" height="6.8" fill="#203040" />
<path d="M965.5,160.5 l4.5,2.5 l-4.5,2.5 z" fill="#f0e020"/>
<rect x="966.5" y="170" width="2" height="2" fill="#303030" />
<circle cx="966.5" cy="181.5" r="2.2" fill="none" stroke="#d02020" stroke-width="1.1"/>
<line x1="967.5" y1="180" x2="971" y2="176.5" stroke="#303030" stroke-width="0.9" />
<line x1="962.2" y1="186.7" x2="975" y2="186.7" stroke="#d0d0d0" stroke-width="0.7" />
<rect x="0" y="441.5" width="975" height="2.5" fill="#f6f6f6" />
<line x1="0" y1="442.2" x2="975" y2="442.2" stroke="#dcdcdc" stroke-width="0.8" />
<rect x="100" y="441.5" width="57.8" height="0.5" fill="#505050" />
<rect x="0" y="444" width="975" height="1.1" fill="#a8a8a8" />
<rect x="2.5" y="446" width="6.5" height="6.5" fill="#f4f4f4" />
<line x1="2.5" y1="452.5" x2="9" y2="452.5" stroke="#808080" stroke-width="0.7" />
<line x1="9" y1="446" x2="9" y2="452.5" stroke="#808080" stroke-width="0.7" />
<rect x="4.5" y="448" width="2.6" height="2.6" fill="#000" />
<rect x="2.5" y="454.5" width="6.5" height="6" fill="#f4f4f4" />
<line x1="2.5" y1="460.5" x2="9" y2="460.5" stroke="#808080" stroke-width="0.7" />
<line x1="9" y1="454.5" x2="9" y2="460.5" stroke="#808080" stroke-width="0.7" />
<rect x="5" y="456.5" width="1.8" height="1.8" fill="#000" />
<rect x="2" y="462" width="7.5" height="51" fill="#c8daee" />
<text x="0" y="0" font-size="6.4" fill="#7a8aa0" transform="translate(8.2,512) rotate(-90)" textLength="50" lengthAdjust="spacingAndGlyphs">Spreadsheet View</text>
<rect x="12.5" y="447.5" width="491" height="54" fill="#fff" stroke="#a8a8a8" stroke-width="0.8" />
<line x1="12.5" y1="501" x2="503.5" y2="501" stroke="#999" stroke-width="1.2" />
<text x="25.2" y="456.7" font-size="6.4" fill="#2a2a2a" stroke="#2a2a2a" stroke-width="0.08" textLength="84.4" lengthAdjust="spacingAndGlyphs" >Multisim Component Evaluator</text>
<text x="112.6" y="456.7" font-size="6.4" fill="#2a2a2a" stroke="#2a2a2a" stroke-width="0.08" textLength="2" lengthAdjust="spacingAndGlyphs" >-</text>
<text x="117.8" y="456.7" font-size="6.4" fill="#2a2a2a" stroke="#2a2a2a" stroke-width="0.08" textLength="97.3" lengthAdjust="spacingAndGlyphs" >Friday, August 21, 2015, 11:25:28 AM</text>
<text x="25.2" y="476" font-size="6.4" fill="#2a2a2a" stroke="#2a2a2a" stroke-width="0.08" textLength="91.9" lengthAdjust="spacingAndGlyphs" >Export to EWNET [MouserDesign1]</text>
<text x="120.8" y="476" font-size="6.4" fill="#2a2a2a" stroke="#2a2a2a" stroke-width="0.08" textLength="2" lengthAdjust="spacingAndGlyphs" >-</text>
<text x="124.5" y="476" font-size="6.4" fill="#2a2a2a" stroke="#2a2a2a" stroke-width="0.08" textLength="97.3" lengthAdjust="spacingAndGlyphs" >Friday, August 21, 2015, 11:33:31 AM</text>
<text x="25.2" y="485" font-size="6.4" fill="#2a2a2a" stroke="#2a2a2a" stroke-width="0.08" textLength="30.6" lengthAdjust="spacingAndGlyphs" >Completed;</text>
<text x="58.8" y="485" font-size="6.4" fill="#2a2a2a" stroke="#2a2a2a" stroke-width="0.08" textLength="62.4" lengthAdjust="spacingAndGlyphs" >0 error(s), 0 warning(s);</text>
<text x="124.5" y="485" font-size="6.4" fill="#2a2a2a" stroke="#2a2a2a" stroke-width="0.08" textLength="34.6" lengthAdjust="spacingAndGlyphs" >Time: 0:00.20</text>
<rect x="13" y="502" width="24" height="11" fill="#f0f0f0" />
<line x1="13" y1="513" x2="37.5" y2="513" stroke="#808080" stroke-width="0.9" />
<text x="15.5" y="511" font-size="6.3" fill="#202040" stroke="#202040" stroke-width="0.08" textLength="19" lengthAdjust="spacingAndGlyphs" >Results</text>
<rect x="37.5" y="503" width="29" height="9" fill="#f3f3f3" stroke="#a0a0a0" stroke-width="0.6" />
<line x1="37.5" y1="512.2" x2="66.5" y2="512.2" stroke="#707070" stroke-width="0.8" />
<line x1="66.5" y1="503" x2="66.5" y2="512.2" stroke="#707070" stroke-width="0.8" />
<text x="39.5" y="509.8" font-size="6.3" fill="#202040" stroke="#202040" stroke-width="0.08" textLength="25" lengthAdjust="spacingAndGlyphs" >Simulation</text>
<line x1="508.5" y1="445" x2="508.5" y2="516" stroke="#c0c0c0" stroke-width="0.8" />
<rect x="512" y="446" width="6.5" height="6.5" fill="#f4f4f4" />
<line x1="512" y1="452.5" x2="518.5" y2="452.5" stroke="#808080" stroke-width="0.7" />
<line x1="518.5" y1="446" x2="518.5" y2="452.5" stroke="#808080" stroke-width="0.7" />
<rect x="514" y="448" width="2.6" height="2.6" fill="#000" />
<rect x="512" y="454.5" width="6.5" height="6" fill="#f4f4f4" />
<line x1="512" y1="460.5" x2="518.5" y2="460.5" stroke="#808080" stroke-width="0.7" />
<line x1="518.5" y1="454.5" x2="518.5" y2="460.5" stroke="#808080" stroke-width="0.7" />
<rect x="514.5" y="456.5" width="1.8" height="1.8" fill="#000" />
<rect x="511.5" y="462" width="7.5" height="50.5" fill="#c8daee" />
<text x="0" y="0" font-size="6.4" fill="#7a8aa0" transform="translate(517.7,512) rotate(-90)" textLength="50" lengthAdjust="spacingAndGlyphs">Circuit Parameters</text>
<rect x="521" y="447" width="451" height="66" fill="#f0f0f0" stroke="#d0d0d0" stroke-width="0.8" />
<rect x="526.5" y="452.5" width="4.5" height="6.5" fill="#505860" stroke="#303030" stroke-width="0.5" />
<rect x="526.5" y="454.5" width="4.5" height="0.6" fill="#d0d0d0" />
<rect x="526.5" y="457.5" width="4.5" height="1.5" fill="#2a5ab0" />
<path d="M532,457.5 h2 l-1,1.2 z" fill="#202020"/>
<rect x="541.5" y="452.5" width="4.5" height="6.5" fill="#f0f0f0" stroke="#b8b8b8" stroke-width="0.7" />
<line x1="541.5" y1="455.2" x2="546.0" y2="455.2" stroke="#b8b8b8" stroke-width="0.5" />
<line x1="543.0" y1="457" x2="547.0" y2="457" stroke="#b0b0b0" stroke-width="0.7" />
<rect x="556.5" y="452.5" width="4.5" height="6.5" fill="#f0f0f0" stroke="#b8b8b8" stroke-width="0.7" />
<line x1="556.5" y1="455.2" x2="561.0" y2="455.2" stroke="#b8b8b8" stroke-width="0.5" />
<line x1="558.0" y1="457" x2="562.0" y2="457" stroke="#b0b0b0" stroke-width="0.7" />
<rect x="571.5" y="452.5" width="4.5" height="6.5" fill="#f0f0f0" stroke="#b8b8b8" stroke-width="0.7" />
<line x1="571.5" y1="455.2" x2="576.0" y2="455.2" stroke="#b8b8b8" stroke-width="0.5" />
<line x1="573.0" y1="457" x2="577.0" y2="457" stroke="#b0b0b0" stroke-width="0.7" />
<line x1="547" y1="456" x2="549" y2="458" stroke="#c0c0c0" stroke-width="0.6" />
<line x1="549" y1="456" x2="547" y2="458" stroke="#c0c0c0" stroke-width="0.6" />
<path d="M562,455 a1.5,1.5 0 0 1 0,3" fill="none" stroke="#b8b8b8" stroke-width="0.6"/>
<path d="M577,455 v2.5 h-1.5" fill="none" stroke="#b8b8b8" stroke-width="0.6"/>
<rect x="587" y="452.5" width="3" height="4" fill="#f0f0f0" stroke="#c0c0c0" stroke-width="0.6" />
<rect x="590.5" y="452.5" width="3" height="4" fill="#f0f0f0" stroke="#c0c0c0" stroke-width="0.6" />
<line x1="592" y1="457" x2="592" y2="460" stroke="#c0c0c0" stroke-width="0.6" />
<line x1="594.5" y1="455" x2="594.5" y2="460" stroke="#c0c0c0" stroke-width="0.6" />
<text x="603" y="459.5" font-size="6.3" fill="#1a1a1a" stroke="#1a1a1a" stroke-width="0.08" textLength="15" lengthAdjust="spacingAndGlyphs" >Export</text>
<path d="M621,456.5 h3 l-1.5,1.6 z" fill="#303030"/>
<circle cx="963.5" cy="456.5" r="3.6" fill="#2a50b0"/>
<text x="962" y="459" font-size="5.5" fill="#fff" stroke="#fff" stroke-width="0.08" font-weight="bold" >?</text>
<rect x="523" y="465" width="448.5" height="47.5" fill="#fff" stroke="#909090" stroke-width="0.8" />
<rect x="523.5" y="465.5" width="447.5" height="10" fill="#f6f8fa" />
<line x1="523" y1="475.8" x2="971" y2="475.8" stroke="#e0e0e0" stroke-width="0.7" />
<line x1="523" y1="486.3" x2="971" y2="486.3" stroke="#ececec" stroke-width="0.6" />
<line x1="523" y1="496.4" x2="971" y2="496.4" stroke="#ececec" stroke-width="0.6" />
<line x1="523" y1="506.3" x2="971" y2="506.3" stroke="#ececec" stroke-width="0.6" />
<line x1="585.3" y1="466" x2="585.3" y2="512" stroke="#e8e8e8" stroke-width="0.6" />
<line x1="661.7" y1="466" x2="661.7" y2="512" stroke="#e8e8e8" stroke-width="0.6" />
<line x1="712.6" y1="466" x2="712.6" y2="512" stroke="#e8e8e8" stroke-width="0.6" />
<line x1="966" y1="466" x2="966" y2="512" stroke="#e8e8e8" stroke-width="0.6" />
<text x="527.5" y="473.5" font-size="6.4" fill="#202030" stroke="#202030" stroke-width="0.08" textLength="16.5" lengthAdjust="spacingAndGlyphs" >Name</text>
<text x="588.6" y="473.5" font-size="6.4" fill="#202030" stroke="#202030" stroke-width="0.08" textLength="27.5" lengthAdjust="spacingAndGlyphs" >Expression</text>
<text x="664.8" y="473.5" font-size="6.4" fill="#202030" stroke="#202030" stroke-width="0.08" textLength="20.5" lengthAdjust="spacingAndGlyphs" >Preview</text>
<text x="716.6" y="473.5" font-size="6.4" fill="#202030" stroke="#202030" stroke-width="0.08" textLength="25.5" lengthAdjust="spacingAndGlyphs" >Comment</text>
<line x1="523" y1="512.6" x2="972" y2="512.6" stroke="#808080" stroke-width="0.9" />
<rect x="0" y="516.2" width="975" height="0.8" fill="#c8c8c8" />
<rect x="0" y="517" width="975" height="10" fill="#f0eeec" />
<text x="1.6" y="525" font-size="6.6" fill="#1a1a1a" stroke="#1a1a1a" stroke-width="0.08" textLength="46.6" lengthAdjust="spacingAndGlyphs" >For Help, press F1</text>
<line x1="756.6" y1="518" x2="756.6" y2="526" stroke="#d0d0d0" stroke-width="0.6" />
<rect x="681.5" y="521" width="1" height="1" fill="#606060" />
<rect x="852" y="521" width="1" height="1" fill="#606060" />
<rect x="944" y="520" width="3" height="6" fill="none" stroke="#c0c0c0" stroke-width="0.5" />
<rect x="948" y="520" width="3" height="6" fill="none" stroke="#c0c0c0" stroke-width="0.5" />
<rect x="952" y="520" width="3" height="6" fill="none" stroke="#c0c0c0" stroke-width="0.5" />
<rect x="956" y="520" width="3" height="6" fill="none" stroke="#c0c0c0" stroke-width="0.5" />
<rect x="960" y="520" width="3" height="6" fill="none" stroke="#c0c0c0" stroke-width="0.5" />
<rect x="964" y="520" width="3" height="6" fill="none" stroke="#c0c0c0" stroke-width="0.5" />
<rect x="968" y="520" width="3" height="6" fill="none" stroke="#c0c0c0" stroke-width="0.5" />
<rect x="0" y="527" width="975" height="5" fill="url(#taskg)" />
<ellipse cx="14" cy="532" rx="8" ry="3" fill="#d0d8f0" stroke="#8090c0" stroke-width="0.6"/>
<rect x="40" y="529" width="3" height="3" fill="#f0c0a0" />
<rect x="74" y="528.5" width="4" height="3.5" fill="#f04040" />
<rect x="94" y="527.5" width="28" height="4.5" fill="#f8f8fa" stroke="#c0c8d8" stroke-width="0.6" />
<rect x="98" y="529" width="14" height="3" fill="#2a6ad0" />
<rect x="126" y="527.5" width="28" height="4.5" fill="#f8f8fa" stroke="#c0c8d8" stroke-width="0.6" />
<rect x="134" y="529.5" width="8" height="2.5" fill="#9a80c0" />
<rect x="157" y="527.5" width="28" height="4.5" fill="#f8f8fa" stroke="#c0c8d8" stroke-width="0.6" />
<rect x="166" y="529.5" width="8" height="2.5" fill="#9a80c0" />
<rect x="850" y="527" width="125" height="5" fill="#6a7a8a" opacity="0.5"/></svg>
</body></html>
